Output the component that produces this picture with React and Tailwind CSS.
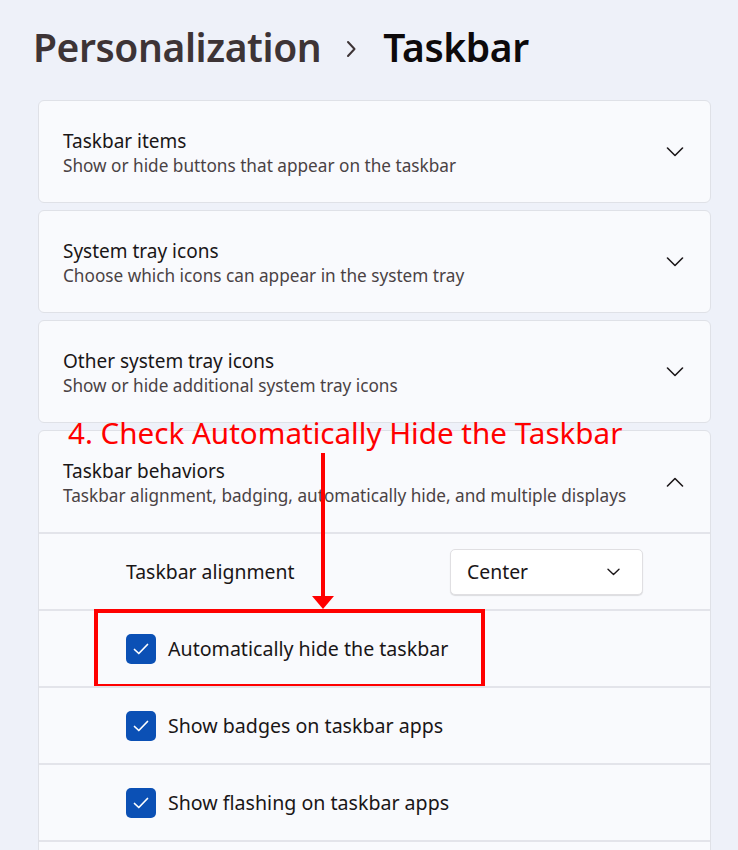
import { useState } from "react";

const font = { fontFamily: '"Noto Sans", "Open Sans", sans-serif' };

function Chevron({ up = false, className = "" }) {
  return (
    <svg width="18" height="10" viewBox="0 0 18 10" className={className} fill="none">
      <path
        d={up ? "M1.5 9 L9 1.5 L16.5 9" : "M1.5 1 L9 8.5 L16.5 1"}
        stroke="#1c1719"
        strokeWidth="1.6"
        strokeLinecap="round"
        strokeLinejoin="round"
      />
    </svg>
  );
}

function Checkbox() {
  return (
    <span className="grid h-[30px] w-[30px] place-items-center rounded-[5px] bg-[#0b50b5]">
      <svg width="16" height="12" viewBox="0 0 16 12" fill="none">
        <path d="M1.5 6.5 L5.8 10.5 L14.5 1.5" stroke="#fff" strokeWidth="1.7" strokeLinecap="round" strokeLinejoin="round" />
      </svg>
    </span>
  );
}

function Header({ title, subtitle, open = false }) {
  return (
    <div className="flex h-[101px] items-center justify-between pl-[24px] pr-[26px]">
      <div className="pt-[2px]">
        <div className="text-[19px] leading-[26px] text-[#1a1617]">{title}</div>
        <div className="text-[17.2px] leading-[24px] text-[#4a4244]">{subtitle}</div>
      </div>
      <Chevron up={open} />
    </div>
  );
}

const cards = [
  ["Taskbar items", "Show or hide buttons that appear on the taskbar"],
  ["System tray icons", "Choose which icons can appear in the system tray"],
  ["Other system tray icons", "Show or hide additional system tray icons"],
];

const options = [
  "Automatically hide the taskbar",
  "Show badges on taskbar apps",
  "Show flashing on taskbar apps",
];

export default function App() {
  const [align] = useState("Center");
  return (
    <div className="relative h-[850px] overflow-hidden bg-[#eef1f9]" style={font}>
      <h1 className="flex h-[100px] items-center pb-[6px] pl-[33px] text-[39px] font-semibold tracking-[-0.4px]">
        <span className="text-[#3d3436]">Personalization</span>
        <svg width="12" height="18" viewBox="0 0 12 18" className="ml-[24px] mr-[26px] mt-[4px]" fill="none">
          <path d="M3 2 L9.5 9 L3 16" stroke="#3d3436" strokeWidth="2" strokeLinecap="round" strokeLinejoin="round" />
        </svg>
        <span className="text-[#0d0a0b]">Taskbar</span>
      </h1>

      <div className="ml-[38px] mr-[27px] flex flex-col gap-[7px]">
        {cards.map(([t, s]) => (
          <div key={t} className="rounded-[6px] border border-[#dfe1e7] bg-[#f9fafd]">
            <Header title={t} subtitle={s} />
          </div>
        ))}

        <div className="rounded-[6px] border border-[#dfe1e7] bg-[#f9fafd]">
          <Header
            title="Taskbar behaviors"
            subtitle="Taskbar alignment, badging, automatically hide, and multiple displays"
            open
          />
          <div className="flex h-[77px] items-center justify-between border-t-2 border-[#e3e4ea] pl-[87px] pr-[67px]">
            <span className="text-[19.4px] text-[#1a1617]">Taskbar alignment</span>
            <div className="flex h-[46px] w-[193px] items-center justify-between rounded-[5px] border border-[#e0dfe2] bg-white pl-[16px] pr-[22px] shadow-[0_1px_1px_rgba(0,0,0,0.12)]">
              <span className="text-[19.4px] text-[#1a1617]">{align}</span>
              <svg width="13" height="8" viewBox="0 0 13 8" fill="none">
                <path d="M1 1.2 L6.5 6.5 L12 1.2" stroke="#1c1719" strokeWidth="1.4" strokeLinecap="round" strokeLinejoin="round" />
              </svg>
            </div>
          </div>
          {options.map((o, i) => (
            <div
              key={o}
              className="relative flex h-[77px] items-center gap-[12px] border-t-2 border-[#e3e4ea] pl-[87px]"
            >
              <Checkbox />
              <span className="text-[19.6px] text-[#1a1617]">{o}</span>
              {i === 0 && (
                <div className="absolute left-[55px] top-[-2px] h-[79px] w-[391px] border-[4px] border-[#ff0000]" />
              )}
            </div>
          ))}
          <div className="h-[77px] border-t-2 border-[#e3e4ea]" />
        </div>
      </div>

      {/* annotation */}
      <div className="absolute left-[68px] top-[413px] text-[29.6px] leading-[40px] text-[#ff0000]">
        4. Check Automatically Hide the Taskbar
      </div>
      <div className="absolute left-[321px] top-[453px] h-[145px] w-[4px] bg-[#ff0000]" />
      <svg className="absolute left-[312px] top-[596px]" width="22" height="13" viewBox="0 0 22 13">
        <path d="M0 0 H22 L11 13 Z" fill="#ff0000" />
      </svg>
    </div>
  );
}
